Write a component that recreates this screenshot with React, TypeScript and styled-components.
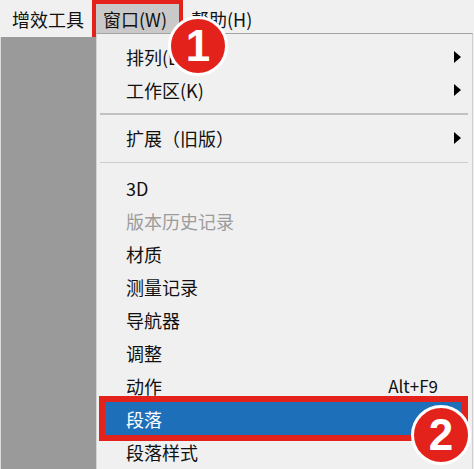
import { createGlobalStyle, styled } from "styled-components";

const GlobalStyle = createGlobalStyle`
  html, body {
    margin: 0;
    padding: 0;
    background: #f0f0f0;
  }
  * {
    box-sizing: border-box;
  }
`;

type Item =
  | { kind: "sep"; thick?: boolean }
  | {
      kind: "item";
      label: string;
      sub?: boolean;
      disabled?: boolean;
      shortcut?: string;
      active?: boolean;
    };

const items: Item[] = [
  { kind: "item", label: "排列(L)", sub: true },
  { kind: "item", label: "工作区(K)", sub: true },
  { kind: "sep", thick: true },
  { kind: "item", label: "扩展（旧版）", sub: true },
  { kind: "sep" },
  { kind: "item", label: "3D" },
  { kind: "item", label: "版本历史记录", disabled: true },
  { kind: "item", label: "材质" },
  { kind: "item", label: "测量记录" },
  { kind: "item", label: "导航器" },
  { kind: "item", label: "调整" },
  { kind: "item", label: "动作", shortcut: "Alt+F9" },
  { kind: "item", label: "段落", active: true },
  { kind: "item", label: "段落样式" },
];

const App = () => {
  return (
    <StScreen>
      <GlobalStyle />
      <StMenuBar>
        <StMenuTitle>增效工具</StMenuTitle>
        <StMenuTitle $open>窗口(W)</StMenuTitle>
        <StMenuTitle>帮助(H)</StMenuTitle>
      </StMenuBar>
      <StBody>
        <StCanvas />
        <StMenu>
          {items.map((it, i) =>
            it.kind === "sep" ? (
              <StSeparator key={i} $thick={it.thick} />
            ) : (
              <StRow key={i} $active={it.active} $disabled={it.disabled}>
                <span>{it.label}</span>
                {it.sub && <StArrow />}
                {it.shortcut && <StShortcut>{it.shortcut}</StShortcut>}
              </StRow>
            )
          )}
        </StMenu>
      </StBody>
      <StBadge $x={198} $y={46}>1</StBadge>
      <StBadge $x={441} $y={435}>2</StBadge>
    </StScreen>
  );
};

export default App;

const StScreen = styled.div`
  position: relative;
  display: flex;
  flex-direction: column;

  width: 474px;
  height: 469px;
  overflow: hidden;

  background: #f0f0f0;
  font-family: "Noto Sans CJK SC", "Microsoft YaHei", sans-serif;
  font-size: 18px;
  color: #111;
`;

const StMenuBar = styled.div`
  display: flex;
  flex-shrink: 0;

  height: 37px;
  padding-left: 4px;

  background: #f0f0f0;
`;

const StMenuTitle = styled.div<{ $open?: boolean }>`
  display: flex;
  align-items: center;

  padding: 0 ${(p) => (p.$open ? "12px 0 11px" : "8px")};
  width: ${(p) => (p.$open ? "91px" : "auto")};

  background: ${(p) => (p.$open ? "#c9c9c9" : "transparent")};
  box-shadow: ${(p) => (p.$open ? "inset 0 0 0 4px #e3231b" : "none")};
  white-space: nowrap;
`;

const StBody = styled.div`
  display: flex;
  flex: 1;
  min-height: 0;
`;

const StCanvas = styled.div`
  flex-shrink: 0;

  width: 96px;

  border-left: 1px solid #dcdcdc;
  background: #9a9a9a;
`;

const StMenu = styled.div`
  display: flex;
  flex-direction: column;
  flex: 1;

  margin: -4px 1px 0 0;
  padding-top: 6px;

  border-top: 1px solid #a3a3a3;
  border-left: 1px solid #d4d4d4;
  border-right: 1px solid #cfcfcf;
  background: #f0f0f0;
`;

const StRow = styled.div<{ $active?: boolean; $disabled?: boolean }>`
  position: relative;
  display: flex;
  align-items: center;
  justify-content: space-between;
  flex-shrink: 0;

  height: 33px;
  margin: ${(p) => (p.$active ? "0 10px 0 8px" : "0")};
  padding: ${(p) => (p.$active ? "0 12px 0 21px" : "0 11px 0 29px")};

  background: ${(p) => (p.$active ? "#1e6fba" : "transparent")};
  outline: ${(p) => (p.$active ? "6px solid #e3231b" : "none")};
  color: ${(p) => (p.$active ? "#fff" : p.$disabled ? "#9c9c9c" : "#111")};
  white-space: nowrap;
`;

const StArrow = styled.i`
  width: 0;
  height: 0;

  border-left: 7px solid #000;
  border-top: 6px solid transparent;
  border-bottom: 6px solid transparent;
`;

const StShortcut = styled.span`
  margin-right: 23px;

  font-size: 17px;
`;

const StSeparator = styled.div<{ $thick?: boolean }>`
  display: flex;
  align-items: center;
  flex-shrink: 0;

  height: ${(p) => (p.$thick ? "15px" : "17px")};
  padding: 0 4px 0 3px;

  &::after {
    content: "";
    flex: 1;
    height: ${(p) => (p.$thick ? "2px" : "1px")};
    background: ${(p) => (p.$thick ? "#c2c2c2" : "#cdcdcd")};
  }
`;

const StBadge = styled.div<{ $x: number; $y: number }>`
  position: absolute;
  left: ${(p) => p.$x - 30}px;
  top: ${(p) => p.$y - 30}px;
  display: flex;
  align-items: center;
  justify-content: center;

  width: 60px;
  height: 60px;

  border: 3px solid #fff;
  border-radius: 50%;
  background: #e3231b;
  color: #fff;
  font-family: "Liberation Sans", Arial, sans-serif;
  font-size: 44px;
  font-weight: 700;
  line-height: 1;
`;
